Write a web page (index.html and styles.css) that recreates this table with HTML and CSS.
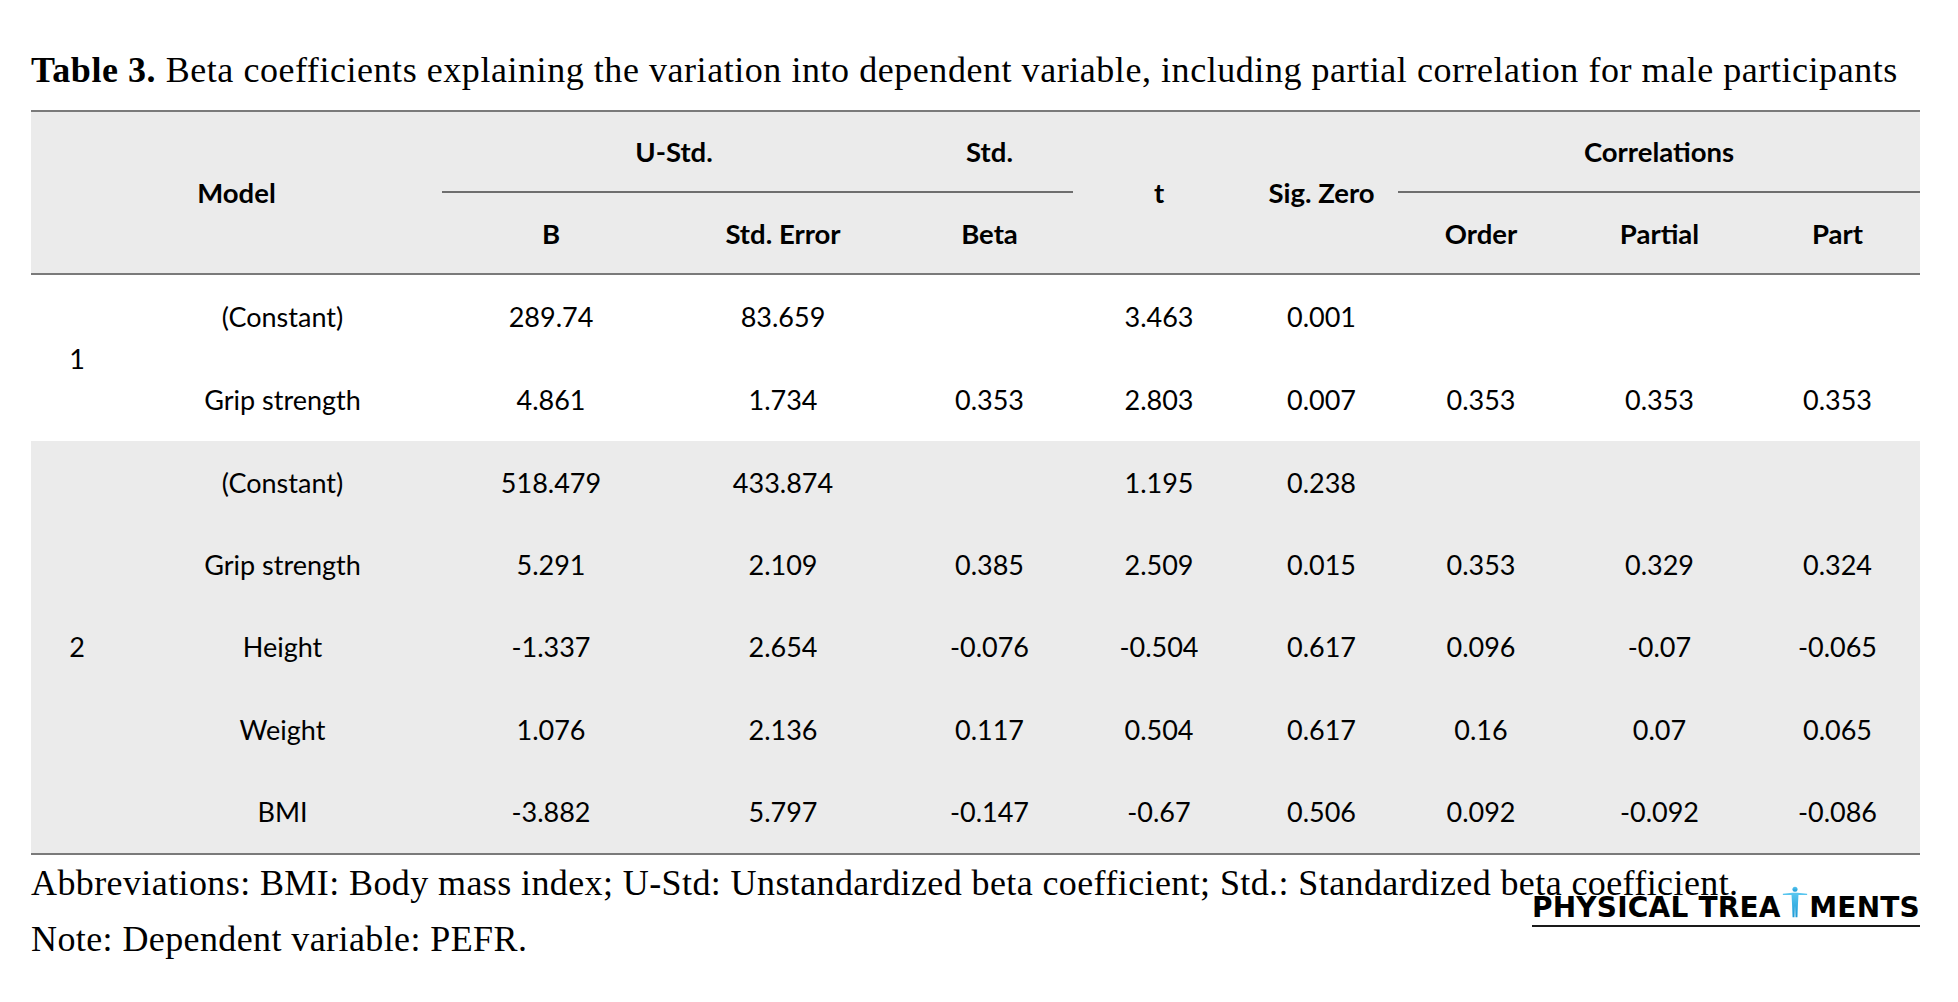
FILE: index.html
```html
<!DOCTYPE html>
<html lang="en">
<head>
<meta charset="utf-8">
<title>Table 3</title>
<link rel="stylesheet" href="styles.css">
</head>
<body>
<main class="page">
  <p class="caption"><b>Table 3.</b> Beta coefficients explaining the variation into dependent variable, including partial correlation for male participants</p>
  <table class="data">
    <colgroup>
      <col class="c-num"><col class="c-label"><col class="c-b"><col class="c-se"><col class="c-beta"><col class="c-t"><col class="c-sig"><col class="c-order"><col class="c-partial"><col class="c-part">
    </colgroup>
    <thead>
      <tr class="h1">
        <th colspan="2" rowspan="2" class="h-bottom">Model</th>
        <th colspan="2" class="h-group">U-Std.</th>
        <th class="h-group">Std.</th>
        <th rowspan="2" class="h-bottom">t</th>
        <th rowspan="2" class="h-bottom">Sig. Zero</th>
        <th colspan="3" class="h-group">Correlations</th>
      </tr>
      <tr class="h2">
        <th class="h-bottom">B</th>
        <th class="h-bottom">Std. Error</th>
        <th class="h-bottom">Beta</th>
        <th class="h-bottom">Order</th>
        <th class="h-bottom">Partial</th>
        <th class="h-bottom">Part</th>
      </tr>
    </thead>
    <tbody class="g1">
      <tr><td rowspan="2">1</td><td>(Constant)</td><td>289.74</td><td>83.659</td><td></td><td>3.463</td><td>0.001</td><td></td><td></td><td></td></tr>
      <tr><td>Grip strength</td><td>4.861</td><td>1.734</td><td>0.353</td><td>2.803</td><td>0.007</td><td>0.353</td><td>0.353</td><td>0.353</td></tr>
    </tbody>
    <tbody class="g2">
      <tr><td rowspan="5">2</td><td>(Constant)</td><td>518.479</td><td>433.874</td><td></td><td>1.195</td><td>0.238</td><td></td><td></td><td></td></tr>
      <tr><td>Grip strength</td><td>5.291</td><td>2.109</td><td>0.385</td><td>2.509</td><td>0.015</td><td>0.353</td><td>0.329</td><td>0.324</td></tr>
      <tr><td>Height</td><td>-1.337</td><td>2.654</td><td>-0.076</td><td>-0.504</td><td>0.617</td><td>0.096</td><td>-0.07</td><td>-0.065</td></tr>
      <tr><td>Weight</td><td>1.076</td><td>2.136</td><td>0.117</td><td>0.504</td><td>0.617</td><td>0.16</td><td>0.07</td><td>0.065</td></tr>
      <tr class="last"><td>BMI</td><td>-3.882</td><td>5.797</td><td>-0.147</td><td>-0.67</td><td>0.506</td><td>0.092</td><td>-0.092</td><td>-0.086</td></tr>
    </tbody>
  </table>
  <div class="notes">
    <p class="note">Abbreviations: BMI: Body mass index; U-Std: Unstandardized beta coefficient; Std.: Standardized beta coefficient.</p>
    <p class="note">Note: Dependent variable: PEFR.</p>
    <div class="logo" aria-label="Physical Treatments">
      <span class="logo-text">PHYSICAL TREA</span><svg class="logo-fig" viewBox="0 0 30 36" width="26" height="32" aria-hidden="true">
        <defs>
          <linearGradient id="fg" x1="0" y1="0" x2="0" y2="1">
            <stop offset="0" stop-color="#5cc8f0"/>
            <stop offset="1" stop-color="#1b9ad6"/>
          </linearGradient>
        </defs>
        <circle cx="15" cy="3.2" r="2.9" fill="url(#fg)"/>
        <path d="M1 8.6 L12 7.2 L18 7.2 L29 8.6 L29 9.8 L19 9.8 L18.4 21 L17.8 35.5 L15.6 35.5 L15 22 L14.4 35.5 L12.2 35.5 L11.6 21 L11 9.8 L1 9.8 Z" fill="url(#fg)"/>
      </svg><span class="logo-text">MENTS</span>
    </div>
  </div>
</main>
</body>
</html>
```
FILE: styles.css
```css
html, body {
  margin: 0;
  padding: 0;
  background: #ffffff;
}

.page {
  padding: 48px 0 0 31px;
  width: 1889px;
}

.caption {
  margin: 0 0 18px 0;
  font-family: "Liberation Serif", "Times New Roman", serif;
  font-size: 36px;
  line-height: 44px;
  letter-spacing: 0.55px;
  color: #000;
  white-space: nowrap;
}

.data {
  width: 1889px;
  border-collapse: collapse;
  table-layout: fixed;
  font-family: Lato, "Open Sans", sans-serif;
  font-size: 27px;
  color: #000;
}

.c-num { width: 92px; }
.c-label { width: 319px; }
.c-b { width: 218px; }
.c-se { width: 246px; }
.c-beta { width: 167px; }
.c-t { width: 172px; }
.c-sig { width: 153px; }
.c-order { width: 166px; }
.c-partial { width: 191px; }
.c-part { width: 165px; }

.data thead {
  background: #ebebeb;
}

.data thead tr.h1 {
  border-top: 2px solid #7a7a7a;
}

.data th {
  font-weight: 700;
  font-size: 27.5px;
  text-align: center;
  vertical-align: middle;
  padding: 0;
}

.h1 th { height: 79px; }
.h2 th { height: 80px; }

.h-group {
  border-bottom: 2px solid #6e6e6e;
}

.h-bottom {
  border-bottom: 2px solid #7a7a7a;
}

.data td {
  text-align: center;
  vertical-align: middle;
  padding: 0;
  height: 83px;
  font-weight: 400;
}

.g1 { background: #ffffff; }
.g2 { background: #ebebeb; }
.g2 td { height: 82.4px; }
.g2 tr.last { border-bottom: 2px solid #7a7a7a; }

.notes {
  position: relative;
  padding-top: 0;
}

.note {
  margin: 0;
  font-family: "Liberation Serif", "Times New Roman", serif;
  font-size: 36px;
  line-height: 56px;
  letter-spacing: 0.4px;
  color: #000;
  white-space: nowrap;
}

.logo {
  position: absolute;
  left: 1501px;
  top: 31px;
  width: 388px;
  display: flex;
  align-items: flex-end;
  justify-content: space-between;
  border-bottom: 2.5px solid #1a1a1a;
  padding-bottom: 6px;
}

.logo-text {
  font-family: "DejaVu Sans", sans-serif;
  font-weight: 700;
  font-size: 28px;
  line-height: 22px;
  letter-spacing: 0.2px;
  color: #000;
  white-space: pre;
}

.logo-fig {
  display: block;
  margin: 0 1px 1px 1px;
}
```
